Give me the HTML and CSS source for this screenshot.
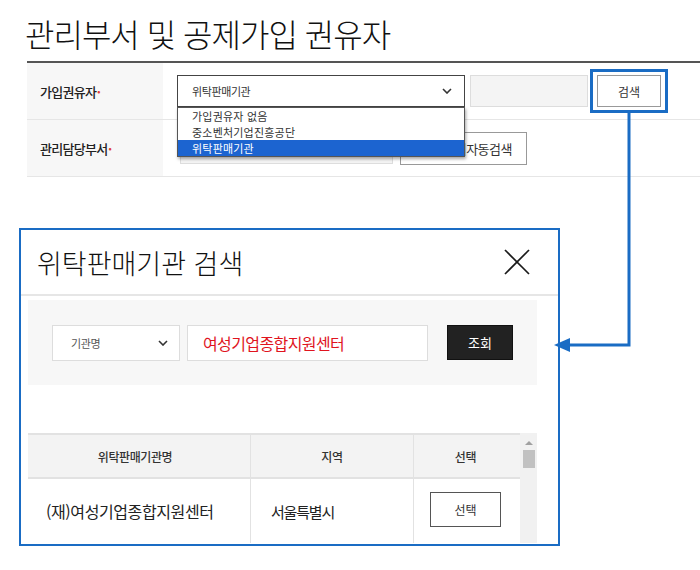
FILE: index.html
```html
<!DOCTYPE html>
<html lang="ko">
<head>
<meta charset="utf-8">
<title>관리부서 및 공제가입 권유자</title>
<link rel="stylesheet" href="styles.css">
</head>
<body>
<div class="page">
  <h1 class="title">관리부서 및 공제가입 권유자</h1>

  <div class="form">
    <div class="row">
      <div class="label">가입권유자<span class="req">•</span></div>
      <div class="field">
        <div class="select sel-main">
          <span>위탁판매기관</span>
          <svg class="chev" width="10" height="6" viewBox="0 0 10 6"><polyline points="1,1 5,5 9,1" fill="none" stroke="#333" stroke-width="1.6"/></svg>
          <ul class="dropdown">
            <li>가입권유자 없음</li>
            <li>중소벤처기업진흥공단</li>
            <li class="on">위탁판매기관</li>
          </ul>
        </div>
        <div class="input gray w-mid"></div>
        <div class="btn-wrap">
          <button class="btn btn-search">검색</button>
          <span class="highlight"></span>
        </div>
      </div>
    </div>
    <div class="row">
      <div class="label">관리담당부서<span class="req">•</span></div>
      <div class="field field2">
        <div class="input gray w-dept"></div>
        <button class="btn btn-auto">부서자동검색</button>
      </div>
    </div>
  </div>

  <div class="modal">
    <div class="modal-head">
      <h2 class="modal-title">위탁판매기관 검색</h2>
      <svg class="close" width="28" height="28" viewBox="0 0 28 28"><line x1="2" y1="2" x2="26" y2="26" stroke="#1a1a1a" stroke-width="1.7"/><line x1="26" y1="2" x2="2" y2="26" stroke="#1a1a1a" stroke-width="1.7"/></svg>
    </div>
    <div class="modal-body">
      <div class="search-box">
        <div class="select sel-kind">
          <span>기관명</span>
          <svg class="chev" width="10" height="6" viewBox="0 0 10 6"><polyline points="1,1 5,5 9,1" fill="none" stroke="#333" stroke-width="1.6"/></svg>
        </div>
        <div class="input q">여성기업종합지원센터</div>
        <button class="btn-dark">조회</button>
      </div>

      <div class="table-wrap">
        <div class="table">
          <div class="thead">
            <div class="c c1">위탁판매기관명</div>
            <div class="c c2">지역</div>
            <div class="c c3">선택</div>
          </div>
          <div class="trow">
            <div class="c c1 name">(재)여성기업종합지원센터</div>
            <div class="c c2 region">서울특별시</div>
            <div class="c c3"><button class="btn btn-pick">선택</button></div>
          </div>
        </div>
        <div class="scrollbar">
          <span class="arrow-up"></span>
          <span class="thumb"></span>
        </div>
      </div>
    </div>
  </div>

  <svg class="connector" width="700" height="570" viewBox="0 0 700 570">
    <polyline points="629,113 629,345 568,345" fill="none" stroke="#1a6cc4" stroke-width="3"/>
    <polygon points="554,345 570,338 570,352" fill="#1a6cc4"/>
  </svg>
</div>
</body>
</html>
```

FILE: styles.css
```css
* { box-sizing: border-box; }

html, body {
  margin: 0;
  padding: 0;
  background: #fff;
}

body {
  width: 700px;
  height: 570px;
  overflow: hidden;
  font-family: "Noto Sans CJK KR", "Noto Sans", sans-serif;
  color: #222;
}

.page {
  position: relative;
  width: 700px;
  height: 570px;
  padding-top: 9px;
}

.title {
  margin: 0 0 4px 25px;
  font-size: 32px;
  line-height: 48px;
  font-weight: 300;
  letter-spacing: -1px;
  color: #111;
}

/* form table */
.form {
  margin-left: 27px;
  border-top: 2px solid #555;
}

.row {
  display: flex;
  height: 57px;
  border-bottom: 1px solid #e6e6e6;
}

.label {
  width: 136px;
  background: #f7f7f7;
  padding-left: 13px;
  display: flex;
  align-items: center;
  font-size: 13px;
  font-weight: 500;
  letter-spacing: -0.7px;
  color: #222;
}

.req {
  color: #e0403a;
  font-size: 9px;
  margin-left: 1px;
}

.field {
  display: flex;
  align-items: center;
  padding-left: 14px;
}

.select {
  position: relative;
  display: flex;
  align-items: center;
  justify-content: space-between;
  background: #fff;
  font-size: 11px;
  letter-spacing: -0.4px;
  color: #333;
}

.sel-main {
  width: 288px;
  height: 32px;
  border: 1px solid #444;
  padding: 0 12px 0 14px;
}

.chev { display: block; }

.dropdown {
  position: absolute;
  left: -1px;
  top: 31px;
  width: 288px;
  margin: 0;
  padding: 0;
  list-style: none;
  background: #fff;
  border: 1px solid #555;
  box-shadow: 1px 2px 3px rgba(0,0,0,0.35);
  z-index: 5;
}

.dropdown li {
  height: 16px;
  line-height: 16px;
  padding-left: 14px;
  font-size: 11px;
  color: #333;
  letter-spacing: 0.2px;
}

.dropdown li.on {
  background: #1c64d0;
  color: #fff;
}

.input {
  height: 32px;
  border: 1px solid #ddd;
  background: #fff;
}

.input.gray { background: #f4f4f4; }

.w-mid {
  width: 118px;
  margin-left: 5px;
}

.btn-wrap {
  position: relative;
  margin-left: 9px;
}

.btn {
  display: flex;
  align-items: center;
  justify-content: center;
  background: #fff;
  border: 1px solid #999;
  font-family: inherit;
  font-size: 12px;
  color: #333;
  padding: 0;
}

.btn-search {
  width: 64px;
  height: 32px;
}

.highlight {
  position: absolute;
  left: -7px;
  top: -6px;
  right: -7px;
  bottom: -6px;
  border: 3px solid #1a6cc4;
}

.field2 .w-dept {
  width: 213px;
  margin-left: 3px;
  height: 31px;
}

.btn-auto {
  width: 127px;
  height: 33px;
  margin-left: 7px;
  justify-content: flex-end;
  padding-right: 14px;
  font-size: 13px;
  letter-spacing: -0.5px;
  overflow: hidden;
  white-space: nowrap;
}

/* modal */
.modal {
  margin: 51px 0 0 19px;
  width: 541px;
  height: 318px;
  border: 2px solid #1a6cc4;
  background: #fff;
  overflow: hidden;
}

.modal-head {
  display: flex;
  align-items: center;
  justify-content: space-between;
  height: 66px;
  padding: 0 27px 0 16px;
  border-bottom: 2px solid #e6e6e6;
}

.modal-title {
  margin: 0;
  font-size: 27px;
  font-weight: 300;
  letter-spacing: 0;
  color: #111;
}

.close { display: block; }

.modal-body {
  padding: 4px 21px 0 7px;
}

.search-box {
  display: flex;
  align-items: center;
  height: 85px;
  background: #f7f7f7;
  padding-left: 24px;
}

.sel-kind {
  width: 128px;
  height: 36px;
  border: 1px solid #ddd;
  padding: 0 11px 0 18px;
  font-size: 11px;
  color: #555;
}

.input.q {
  width: 241px;
  height: 36px;
  margin-left: 7px;
  display: flex;
  align-items: center;
  padding-left: 15px;
  font-size: 16px;
  letter-spacing: -0.6px;
  color: #e0141e;
}

.btn-dark {
  width: 66px;
  height: 35px;
  margin-left: 19px;
  border: 1px solid #111;
  background: #222;
  color: #fff;
  font-family: inherit;
  font-size: 13px;
  padding: 0;
}

/* table */
.table-wrap {
  display: flex;
  margin-top: 48px;
}

.table {
  width: 492px;
}

.thead, .trow {
  display: flex;
}

.thead {
  height: 46px;
  background: #f3f3f3;
  border-top: 2px solid #e2e2e2;
  border-bottom: 2px solid #e2e2e2;
  font-size: 12px;
  font-weight: 500;
  letter-spacing: -0.4px;
  color: #333;
}

.trow {
  height: 64px;
}

.c {
  display: flex;
  align-items: center;
  justify-content: center;
}

.c1 { width: 222px; padding-right: 8px; }
.c2 { width: 163px; border-left: 1px solid #e2e2e2; }
.c3 { width: 107px; border-left: 1px solid #e2e2e2; padding-right: 3px; }

.name {
  justify-content: flex-start;
  padding-left: 18px;
  padding-right: 0;
  font-size: 16px;
  letter-spacing: -0.4px;
  color: #222;
}

.region {
  justify-content: flex-start;
  padding-left: 20px;
  font-size: 15px;
  letter-spacing: -1.2px;
  color: #222;
}

.btn-pick {
  width: 71px;
  height: 35px;
  border: 1px solid #555;
  font-size: 12px;
  margin-top: -4px;
}

.scrollbar {
  position: relative;
  width: 17px;
  height: 110px;
  background: #f1f1f1;
  display: flex;
  flex-direction: column;
  align-items: center;
}

.arrow-up {
  margin-top: 8px;
  width: 0;
  height: 0;
  border-left: 4px solid transparent;
  border-right: 4px solid transparent;
  border-bottom: 4px solid #a0a0a0;
}

.thumb {
  margin-top: 5px;
  width: 12px;
  height: 18px;
  background: #c1c1c1;
}

.connector {
  position: absolute;
  left: 0;
  top: 0;
  pointer-events: none;
  z-index: 4;
}
```
